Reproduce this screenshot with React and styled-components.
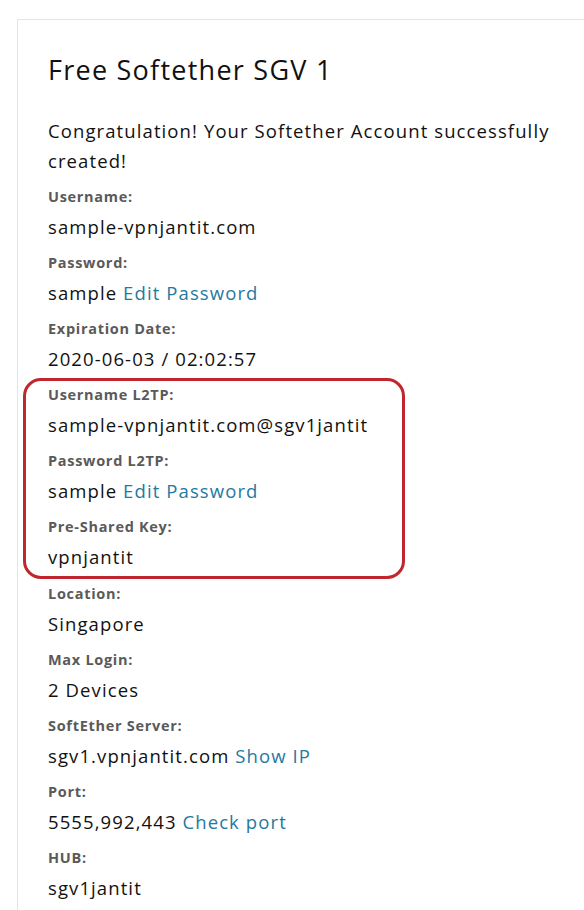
import React from 'react'
import styled, { createGlobalStyle } from 'styled-components'

const GlobalStyle = createGlobalStyle`
  html, body {
    margin: 0;
    padding: 0;
    background: #ffffff;
  }
  body {
    font-family: "Open Sans", "Liberation Sans", sans-serif;
    color: #111;
  }
`

const account = {
  title: 'Free Softether SGV 1',
  message: 'Congratulation! Your Softether Account successfully created!',
}

const Page = styled.div`
  padding: 19px 0 0 17px;
  width: 584px;
  height: 910px;
  box-sizing: border-box;
  overflow: hidden;
`

const Card = styled.div`
  width: 600px;
  min-height: 900px;
  border: 1px solid #e4e4e4;
  border-right: none;
  padding: 32px 30px 0 30px;
  box-sizing: border-box;
`

const Title = styled.h2`
  margin: 0 0 28px 0;
  font-size: 27px;
  font-weight: 400;
  letter-spacing: 1.25px;
  line-height: 36px;
  color: #111;
`

const Message = styled.p`
  margin: 0 0 11px 0;
  font-size: 18.5px;
  line-height: 30px;
  letter-spacing: 1.1px;
  width: 530px;
`

const Label = styled.div`
  font-size: 14.5px;
  font-weight: 700;
  color: #5a5a5a;
  line-height: 20px;
  letter-spacing: 0.7px;
`

const Value = styled.div`
  font-size: 18.5px;
  line-height: 30px;
  margin-top: 5px;
  margin-bottom: 11px;
  letter-spacing: 1.1px;
  color: #111;
`

const Link = styled.a`
  color: #2579a0;
  text-decoration: none;
  cursor: pointer;
`

const Highlight = styled.div`
  width: 382px;
  margin: -7px 0 5px -25px;
  border: 3px solid #c0262d;
  border-radius: 18px;
  padding: 4px 0 0 22px;
  box-sizing: border-box;

  & > ${Value}:last-child {
    margin-bottom: 4px;
  }
`

const Field = ({ label, children }) => (
  <>
    <Label>{label}</Label>
    <Value>{children}</Value>
  </>
)

const App = () => (
  <>
    <GlobalStyle />
    <Page>
      <Card>
        <Title>{account.title}</Title>
        <Message>{account.message}</Message>
        <Field label="Username:">sample-vpnjantit.com</Field>
        <Field label="Password:">
          sample <Link>Edit Password</Link>
        </Field>
        <Field label="Expiration Date:">2020-06-03 / 02:02:57</Field>
        <Highlight>
          <Field label="Username L2TP:">sample-vpnjantit.com@sgv1jantit</Field>
          <Field label="Password L2TP:">
            sample <Link>Edit Password</Link>
          </Field>
          <Field label="Pre-Shared Key:">vpnjantit</Field>
        </Highlight>
        <Field label="Location:">Singapore</Field>
        <Field label="Max Login:">2 Devices</Field>
        <Field label="SoftEther Server:">
          sgv1.vpnjantit.com <Link>Show IP</Link>
        </Field>
        <Field label="Port:">
          5555,992,443 <Link>Check port</Link>
        </Field>
        <Field label="HUB:">sgv1jantit</Field>
      </Card>
    </Page>
  </>
)

export default App
